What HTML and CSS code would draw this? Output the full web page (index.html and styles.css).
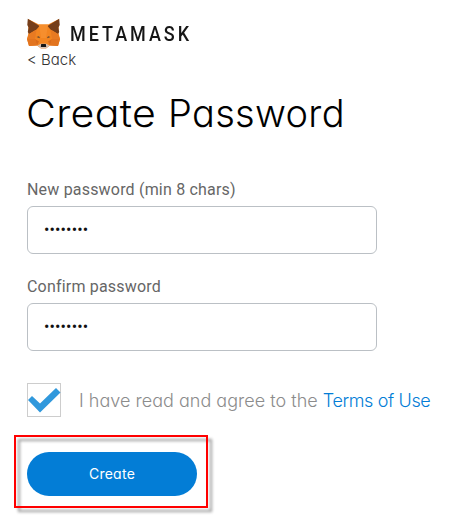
FILE: index.html
```
<!DOCTYPE html>
<html lang="en">
<head>
<meta charset="utf-8">
<title>MetaMask</title>
<link rel="stylesheet" href="styles.css">
</head>
<body>
<main class="page">
  <header class="brand">
    <svg class="fox" viewBox="0 0 33 31" aria-hidden="true">
      <path fill="#f28521" d="M1 1 12 6.500H21L32 1 31.500 15 33 21 31 28 23 27.500 19 30.500H14L10 27.500 2 28 0 21 1.500 15Z"/>
      <path fill="#763e1a" d="M0.800 0.800 12.500 8 9.500 11.500 2 16 0.800 14 1.600 9.500 0.300 7ZM32.200 0.800 20.500 8 23.500 11.500 31 16 32.200 14 31.400 9.500 32.700 7Z"/>
      <path fill="#f68e2d" d="M12 6.500H21L19 20H14Z"/>
      <path fill="#e87a22" d="M2 16 9.500 11.500 8 21H0ZM31 16 23.500 11.500 25 21H33Z"/>
      <path fill="#e2741f" d="M0 21H8L10 27.500 2 28ZM33 21H25L23 27.500 31 28Z"/>
      <path fill="#d96a1b" d="M8 21 12 23.500 10 27.500ZM25 21 21 23.500 23 27.500Z"/>
      <path fill="#5b4434" d="M9.500 19 12 18.300 13 20.300ZM23.500 19 21 18.300 20 20.300Z"/>
      <path fill="#d7c1b3" d="M10.500 27.500 14 25.800H19L22.500 27.500 19 30.500H14Z"/>
      <path fill="#161616" d="M14.200 26H18.800L19.200 29H13.800Z"/>
    </svg>
    <span class="wordmark">METAMASK</span>
  </header>
  <a class="back">&lt; Back</a>
  <h1 class="title"><span class="wide">Create</span> <span class="tight">Password</span></h1>
  <form class="form">
    <label class="label" for="new">New password (min 8 chars)</label>
    <div class="field" id="new">••••••••</div>
    <label class="label second" for="confirm">Confirm password</label>
    <div class="field" id="confirm">••••••••</div>
    <div class="terms">
      <span class="checkbox">
        <svg viewBox="0 0 32 32" aria-hidden="true"><path fill="#3098dc" d="M0 16 4 12 12 19.500 28 4 32.500 8.500 12 28.500Z"/></svg>
      </span>
      <p class="agree"><span class="consent">I have read and agree to the</span> <a class="link">Terms of Use</a></p>
    </div>
    <div class="highlight"><button class="create" type="button">Create</button></div>
  </form>
</main>
</body>
</html>
```
FILE: styles.css
```
* { box-sizing: border-box; }
body {
  margin: 0;
  background: #fff;
  font-family: Inter, "Liberation Sans", sans-serif;
  font-feature-settings: "cv11" 1;
}
.page { min-height: 521px; padding: 18px 27px 0; }
.brand { display: flex; align-items: center; height: 31px; }
.fox { width: 33px; height: 31px; flex: none; }
.wordmark {
  margin-left: 10px;
  padding-top: 2px;
  font: 500 20px/31px Roboto, sans-serif;
  letter-spacing: 3.3px;
  color: #161616;
  transform: scaleX(0.9);
  transform-origin: left;
}
.back {
  display: block;
  height: 21px;
  font-size: 15px;
  line-height: 21px;
  font-weight: 300;
  color: #333;
}
.title {
  display: flex;
  margin: 17px 0 0;
  height: 53px;
  font-size: 38px;
  line-height: 52px;
  font-weight: 300;
  white-space: nowrap;
  color: #000;
}
.title span { transform-origin: left; }
.wide { width: 141px; letter-spacing: 0.3px; transform: translateX(-1px) scaleX(1.08); }
.tight { letter-spacing: 0.3px; }
.form { padding-top: 38px; }
.label {
  display: block;
  height: 28px;
  padding-top: 1px;
  font: 400 16px/22px Roboto, sans-serif;
  letter-spacing: 0.19px;
  color: #666;
}
.second { margin-top: 21px; }
.field {
  width: 350px;
  height: 48px;
  border: 1px solid #bbc0c5;
  border-radius: 6px;
  padding-left: 16px;
  font: 400 16px/46px Roboto, sans-serif;
  letter-spacing: 0.13px;
  color: #111;
}
.terms { display: flex; margin-top: 32px; height: 34px; }
.checkbox { width: 34px; height: 34px; border: 1px solid #cdcdcd; flex: none; }
.checkbox svg { display: block; width: 32px; height: 32px; overflow: visible; }
.agree {
  margin: 0 0 0 18px;
  font-size: 18px;
  line-height: 36px;
  font-weight: 300;
  white-space: nowrap;
}
.consent { color: #8c8c8c; letter-spacing: 0.02px; }
.link { color: #037dd6; letter-spacing: -0.38px; }
.highlight {
  position: relative;
  width: 194px;
  height: 73px;
  margin: 18px 0 0 -13px;
  padding: 17px 13px;
}
.highlight::after {
  content: "";
  position: absolute;
  inset: 0;
  border: 2px solid #f00;
  filter: drop-shadow(4px 4px 1.5px rgba(0, 0, 0, 0.4));
  pointer-events: none;
}
.create {
  position: relative;
  z-index: 1;
  display: block;
  width: 170px;
  height: 44px;
  padding: 0;
  border: 0;
  border-radius: 22px;
  background: #037dd6;
  color: #fff;
  font: 400 14px/44px Inter, sans-serif;
  font-feature-settings: "cv11" 1;
  letter-spacing: 0.25px;
}
```
